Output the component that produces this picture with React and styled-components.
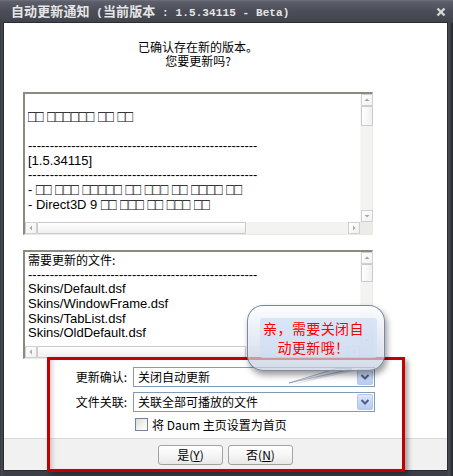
import React from 'react';
import styled, { createGlobalStyle } from 'styled-components';

const GlobalStyle = createGlobalStyle`
  html, body { margin: 0; padding: 0; background: #3b3d45; }
  body { font-family: "Noto Sans CJK SC", sans-serif; }
  * { box-sizing: border-box; }
`;

const Window = styled.div`
  position: relative;
  width: 453px;
  height: 476px;
  background: linear-gradient(90deg, #2c2e35 0px, #474a53 1px, #3d3f48 4px, #3d3f48 447px, #4a4c55 449px, #2a2c33 452px);
  display: flex;
  flex-direction: column;
  overflow: hidden;
`;

const TitleBar = styled.div`
  height: 23px;
  flex: none;
  display: flex;
  align-items: center;
  justify-content: space-between;
  padding: 0 7px 0 11px;
  background: linear-gradient(180deg, #5e616c 0%, #4b4e58 45%, #41434c 100%);
  border-top: 1px solid #6a6d77;
`;

const TitleText = styled.div`
  color: #e6e6e6;
  font-weight: bold;
  font-size: 13px;
  font-family: "Noto Sans CJK SC", sans-serif;
  white-space: pre;
  line-height: 16px;
  letter-spacing: 0.1px;
`;

const TitleMono = styled.span`
  font-family: "Liberation Mono", monospace;
  font-size: 11px;
  font-weight: bold;
`;

const Client = styled.div`
  flex: 1;
  margin: 0 6px 6px 4px;
  background: #fff;
  display: flex;
  flex-direction: column;
  box-shadow: 0 0 0 1px #2a2c33;
`;

const Main = styled.div`
  flex: 1;
  padding-left: 19px;
  display: flex;
  flex-direction: column;
`;

const Header = styled.div`
  width: 350px;
  padding-top: 17px;
  text-align: center;
  font-size: 12px;
  line-height: 14px;
  color: #000;
`;

const BoxFrame = styled.div`
  width: 350px;
  height: ${p => p.$h}px;
  margin-top: ${p => p.$mt}px;
  border-style: solid;
  border-width: 2px 1px 1px 2px;
  border-color: #8b8b81 #ecebe0 #ecebe0 #8b8b81;
  display: grid;
  grid-template-columns: 1fr 12px;
  grid-template-rows: 1fr 12px;
  background: #fff;
`;

const BoxText = styled.div`
  padding: 1px 3px 0;
  font-family: "Liberation Sans", Arial, "Noto Sans CJK SC", sans-serif;
  font-size: 13px;
  line-height: 14.7px;
  color: #000;
  white-space: pre;
  min-width: 0;
`;

const Line = styled.div`
  height: 14.7px;
  font-size: ${p => (p.$cjk ? '12px' : '13px')};
  font-family: ${p => (p.$cjk ? '"Noto Sans CJK SC", sans-serif' : '"Liberation Sans", Arial, sans-serif')};
`;

const Tofu = styled.span`
  display: inline-block;
  line-height: 9px;
  transform: scaleY(1.3);
  transform-origin: 50% 70%;
  color: #000;
`;

const VScroll = styled.div`
  display: flex;
  flex-direction: column;
  background: #f3f3f1;
  border-left: 1px solid #f7f7f5;
`;

const HScroll = styled.div`
  display: flex;
  flex-direction: row;
  background: #f3f3f1;
`;

const Corner = styled.div`
  background: #ebebea;
`;

const ScrollBtn = styled.div`
  width: 12px;
  height: 12px;
  flex: none;
  border: 1px solid #d0d0d0;
  background: linear-gradient(135deg, #ffffff, #f1f1f1);
  display: flex;
  align-items: center;
  justify-content: center;
`;

const Thumb = styled.div`
  flex: none;
  width: ${p => (p.$horiz ? `${p.$len}px` : '12px')};
  height: ${p => (p.$horiz ? '12px' : `${p.$len}px`)};
  border: 1px solid #cacaca;
  border-radius: 1px;
  background: linear-gradient(${p => (p.$horiz ? '180deg' : '90deg')}, #ffffff, #f0f0f0);
`;

const Spacer = styled.div`
  flex: 1;
`;

const Form = styled.div`
  margin-top: 8px;
  display: grid;
  grid-template-columns: 104px 242px;
  grid-template-rows: 20px 20px 13px;
  column-gap: 6px;
  row-gap: 5px;
`;

const Label = styled.div`
  text-align: right;
  font-size: 12px;
  line-height: 20px;
  color: #000;
`;

const Combo = styled.div`
  display: flex;
  align-items: stretch;
  border: 1px solid #7f9db9;
  background: #fff;
`;

const ComboText = styled.div`
  flex: 1;
  padding-left: 4px;
  font-size: 12px;
  line-height: 18px;
  color: #000;
`;

const DropBtn = styled.div`
  width: 16px;
  margin: 1px;
  border: 1px solid #b3c6ec;
  border-radius: 2px;
  background: linear-gradient(180deg, #dde8fc 0%, #c6d6f7 55%, #b8cbf4 100%);
  display: flex;
  align-items: center;
  justify-content: center;
`;

const CheckRow = styled.div`
  grid-column: 2;
  margin-top: 1px;
  padding-left: 2px;
  display: flex;
  align-items: center;
  gap: 4px;
  font-size: 12px;
  line-height: 13px;
  color: #000;
  white-space: nowrap;
`;

const CheckBox = styled.div`
  width: 13px;
  height: 13px;
  flex: none;
  border: 1px solid #6f829e;
  background: linear-gradient(135deg, #dcdcd6 0%, #f4f4f0 60%, #ffffff 100%);
`;

const ButtonBar = styled.div`
  height: 32px;
  flex: none;
  border-top: 1px solid #d9d9d9;
  background: #f1f1f1;
  display: flex;
  justify-content: center;
  gap: 5px;
  padding-top: 6px;
`;

const Button = styled.div`
  width: 65px;
  height: 20px;
  border: 1px solid #a3a3a3;
  border-radius: 3px;
  background: linear-gradient(180deg, #ffffff 0%, #f6f6f6 50%, #e8e8e8 100%);
  font-size: 12px;
  line-height: 18px;
  text-align: center;
  color: #000;
  u { text-decoration: underline; }
`;

const RedMark = styled.div`
  position: absolute;
  left: 47px;
  top: 357px;
  width: 358px;
  height: 115px;
  border: 3px solid #c30000;
  box-shadow: 3px 3px 5px rgba(0, 0, 0, 0.35), inset 5px 0 5px -3px rgba(0, 0, 0, 0.2);
  pointer-events: none;
`;

const Bubble = styled.div`
  position: absolute;
  left: 247px;
  top: 305px;
  width: 138px;
  height: 66px;
  border: 1px solid rgba(105, 120, 145, 0.85);
  border-radius: 16px;
  padding: 12px 7px 12px 12px;
  background: linear-gradient(180deg, rgba(252, 253, 255, 0.88) 0%, rgba(222, 230, 242, 0.72) 45%, rgba(196, 206, 222, 0.72) 100%);
  box-shadow: 2px 4px 6px rgba(0, 0, 0, 0.4), inset 0 1px 2px rgba(255, 255, 255, 0.9);
`;

const BubbleInner = styled.div`
  height: 100%;
  border-radius: 3px;
  background: rgba(208, 222, 244, 0.72);
  padding: 1px 10px 0 0;
  text-align: center;
  color: #ff0000;
  font-size: 14px;
  line-height: 19px;
  letter-spacing: 0.4px;
  white-space: nowrap;
`;

const Tail = styled.svg`
  position: absolute;
  left: 280px;
  top: 362px;
  overflow: visible;
`;

const Arrow = ({ dir }) => {
  const pts = {
    up: '2.5,6 5,3.5 7.5,6',
    down: '2.5,4 5,6.5 7.5,4',
    left: '6,2.5 3.5,5 6,7.5',
    right: '4,2.5 6.5,5 4,7.5',
  }[dir];
  return (
    <svg width="10" height="10" viewBox="0 0 10 10">
      <polygon points={pts} fill="#a8a8a8" />
    </svg>
  );
};

const Chevron = () => (
  <svg width="10" height="8" viewBox="0 0 10 8">
    <path d="M1.5 2 L5 5.5 L8.5 2" fill="none" stroke="#4d6185" strokeWidth="2" />
  </svg>
);

const renderLine = text =>
  text.split(/(□+)/).map((part, i) =>
    part.startsWith('□') ? <Tofu key={i}>{part}</Tofu> : <React.Fragment key={i}>{part}</React.Fragment>
  );

const TextBox = ({ h, mt, vThumb, lines }) => (
  <BoxFrame $h={h} $mt={mt}>
    <BoxText>
      {lines.map((l, i) => (
        <Line key={i} $cjk={l.cjk}>{l.t ? renderLine(l.t) : '\u00a0'}</Line>
      ))}
    </BoxText>
    <VScroll>
      <ScrollBtn><Arrow dir="up" /></ScrollBtn>
      <Thumb $len={vThumb} />
      <Spacer />
      <ScrollBtn><Arrow dir="down" /></ScrollBtn>
    </VScroll>
    <HScroll>
      <ScrollBtn><Arrow dir="left" /></ScrollBtn>
      <Thumb $horiz $len={209} />
      <Spacer />
      <ScrollBtn><Arrow dir="right" /></ScrollBtn>
    </HScroll>
    <Corner />
  </BoxFrame>
);

const dashes = '-'.repeat(53);

const box1 = [
  { t: '' },
  { t: '□□ □□□□□□ □□ □□' },
  { t: '' },
  { t: dashes },
  { t: '[1.5.34115]' },
  { t: dashes },
  { t: '- □□ □□□ □□□□□ □□ □□□ □□ □□□□ □□' },
  { t: '- Direct3D 9 □□ □□□ □□ □□□ □□' },
];

const box2 = [
  { t: '需要更新的文件:', cjk: true },
  { t: dashes },
  { t: 'Skins/Default.dsf' },
  { t: 'Skins/WindowFrame.dsf' },
  { t: 'Skins/TabList.dsf' },
  { t: 'Skins/OldDefault.dsf' },
];

export default function App() {
  return (
    <>
      <GlobalStyle />
      <Window>
        <TitleBar>
          <TitleText>
            自动更新通知<TitleMono> (</TitleMono>当前版本<TitleMono> : 1.5.34115 - Beta)</TitleMono>
          </TitleText>
          <svg width="10" height="10" viewBox="0 0 10 10">
            <path d="M1.5 1.5 L8.5 8.5 M8.5 1.5 L1.5 8.5" stroke="#d6d6d6" strokeWidth="2.4" />
          </svg>
        </TitleBar>
        <Client>
          <Main>
            <Header>
              <div>已确认存在新的版本。</div>
              <div>您要更新吗?</div>
            </Header>
            <TextBox h={143} mt={24} vThumb={20} lines={box1} />
            <TextBox h={109} mt={15} vThumb={18} lines={box2} />
            <Form>
              <Label>更新确认:</Label>
              <Combo>
                <ComboText>关闭自动更新</ComboText>
                <DropBtn><Chevron /></DropBtn>
              </Combo>
              <Label>文件关联:</Label>
              <Combo>
                <ComboText>关联全部可播放的文件</ComboText>
                <DropBtn><Chevron /></DropBtn>
              </Combo>
              <CheckRow>
                <CheckBox />
                <span>将 Daum 主页设置为首页</span>
              </CheckRow>
            </Form>
          </Main>
          <ButtonBar>
            <Button>是(<u>Y</u>)</Button>
            <Button>否(<u>N</u>)</Button>
          </ButtonBar>
        </Client>
        <RedMark />
        <Tail width="80" height="24" viewBox="0 0 80 24">
          <polygon points="58,6 72,7 9,21" fill="rgba(150,160,180,0.35)" transform="translate(2,2)" />
          <polygon points="58,6 72,7 9,21" fill="rgba(222,232,246,0.9)" stroke="rgba(120,135,160,0.75)" strokeWidth="0.8" />
        </Tail>
        <Bubble>
          <BubbleInner>
            亲，需要关闭自
            <br />
            动更新哦！
          </BubbleInner>
        </Bubble>
      </Window>
    </>
  );
}
